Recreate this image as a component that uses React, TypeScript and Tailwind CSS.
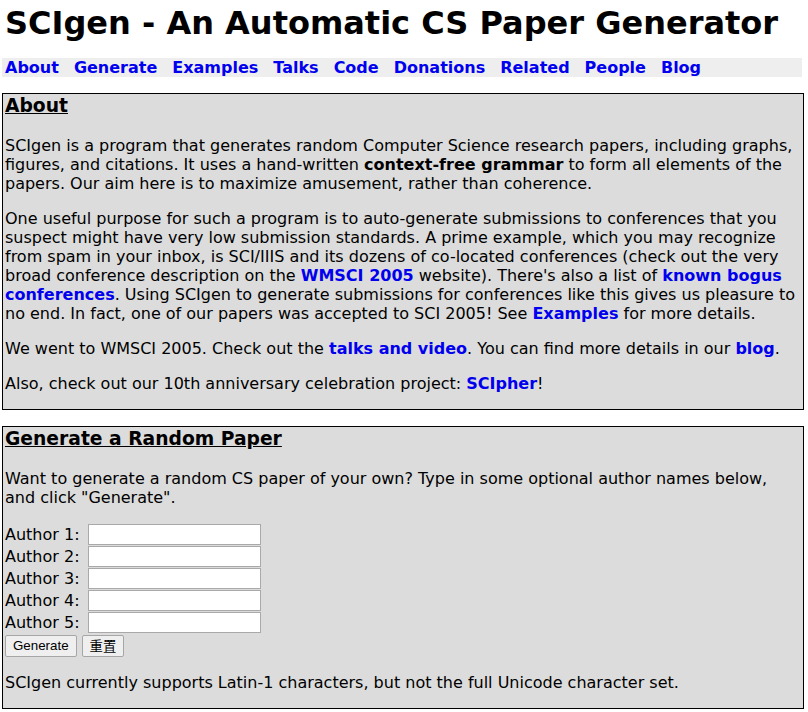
import React from 'react';

const font = "font-['DejaVu_Sans',Verdana,sans-serif]";

const navLinks = ['About', 'Generate', 'Examples', 'Talks', 'Code', 'Donations', 'Related', 'People', 'Blog'];

const A: React.FC<{ children: React.ReactNode }> = ({ children }) => (
    <a href="#" className="font-bold text-[#0000ee] no-underline">
        {children}
    </a>
);

const B: React.FC<{ children: React.ReactNode }> = ({ children }) => <b className="font-bold">{children}</b>;

// each line is laid out as in the reference, so breaks stay put
const Para: React.FC<{ lines: React.ReactNode[] }> = ({ lines }) => (
    <p className="leading-[19px] mb-[16px]">
        {lines.map((l, i) => (
            <span key={i} className="block whitespace-nowrap">
                {l}
            </span>
        ))}
    </p>
);

const Box: React.FC<{ title: string; children: React.ReactNode }> = ({ title, children }) => (
    <div className="w-[802px] border border-black bg-[#dcdcdc] px-[2px] flow-root">
        <h3 className="text-[18.72px] leading-[23px] font-bold underline mb-[19px]">{title}</h3>
        {children}
    </div>
);

const App: React.FC = () => {
    return (
        <div className={`${font} text-black bg-white min-h-[712px] pl-[2px] text-[16px] flow-root`}>
            <h1 className="mt-[5px] pl-[3px] text-[32px] leading-[37px] font-bold whitespace-nowrap">
                SCIgen - An Automatic CS Paper Generator
            </h1>

            <div className="mt-[16px] w-[800px] bg-[#eeeeee] px-[3px] h-[19px] leading-[19px] flex gap-[15px] whitespace-nowrap">
                {navLinks.map((n) => (
                    <A key={n}>{n}</A>
                ))}
            </div>

            <div className="mt-[16px]">
                <Box title="About">
                    <Para
                        lines={[
                            'SCIgen is a program that generates random Computer Science research papers, including graphs,',
                            <>
                                figures, and citations. It uses a hand-written <B>context-free grammar</B> to form all elements of the
                            </>,
                            'papers. Our aim here is to maximize amusement, rather than coherence.',
                        ]}
                    />
                    <Para
                        lines={[
                            'One useful purpose for such a program is to auto-generate submissions to conferences that you',
                            'suspect might have very low submission standards. A prime example, which you may recognize',
                            'from spam in your inbox, is SCI/IIIS and its dozens of co-located conferences (check out the very',
                            <>
                                broad conference description on the <A>WMSCI 2005</A> website). There's also a list of <A>known bogus</A>
                            </>,
                            <>
                                <A>conferences</A>. Using SCIgen to generate submissions for conferences like this gives us pleasure to
                            </>,
                            <>
                                no end. In fact, one of our papers was accepted to SCI 2005! See <A>Examples</A> for more details.
                            </>,
                        ]}
                    />
                    <Para
                        lines={[
                            <>
                                We went to WMSCI 2005. Check out the <A>talks and video</A>. You can find more details in our <A>blog</A>.
                            </>,
                        ]}
                    />
                    <Para
                        lines={[
                            <>
                                Also, check out our 10th anniversary celebration project: <A>SCIpher</A>!
                            </>,
                        ]}
                    />
                </Box>
            </div>

            <div className="mt-[16px]">
                <Box title="Generate a Random Paper">
                    <Para
                        lines={[
                            'Want to generate a random CS paper of your own? Type in some optional author names below,',
                            'and click "Generate".',
                        ]}
                    />
                    <form onSubmit={(e) => e.preventDefault()}>
                        {[1, 2, 3, 4, 5].map((n) => (
                            <div key={n} className="flex items-center h-[22px]">
                                <label className="w-[83px] leading-[19px] whitespace-nowrap">Author {n}:</label>
                                <input
                                    type="text"
                                    className="w-[173px] h-[21px] bg-white border border-[#a9a9a9] outline-none px-[2px] text-[13px]"
                                />
                            </div>
                        ))}
                        <div className="flex gap-[5px] h-[22px] items-center mt-[2px] font-['Liberation_Sans','Noto_Sans_CJK_SC',sans-serif] text-[13.33px]">
                            <button
                                type="submit"
                                className="h-[22px] px-[7px] border border-[#a6a6a6] rounded-[2px] bg-[#efefef] text-black"
                            >
                                Generate
                            </button>
                            <button
                                type="reset"
                                className="h-[22px] px-[7px] border border-[#a6a6a6] rounded-[2px] bg-[#efefef] text-black font-['Noto_Sans_CJK_SC',sans-serif]"
                            >
                                重置
                            </button>
                        </div>
                    </form>
                    <p className="mt-[16px] mb-[16px] leading-[19px] whitespace-nowrap">
                        SCIgen currently supports Latin-1 characters, but not the full Unicode character set.
                    </p>
                </Box>
            </div>
        </div>
    );
};

export default App;
